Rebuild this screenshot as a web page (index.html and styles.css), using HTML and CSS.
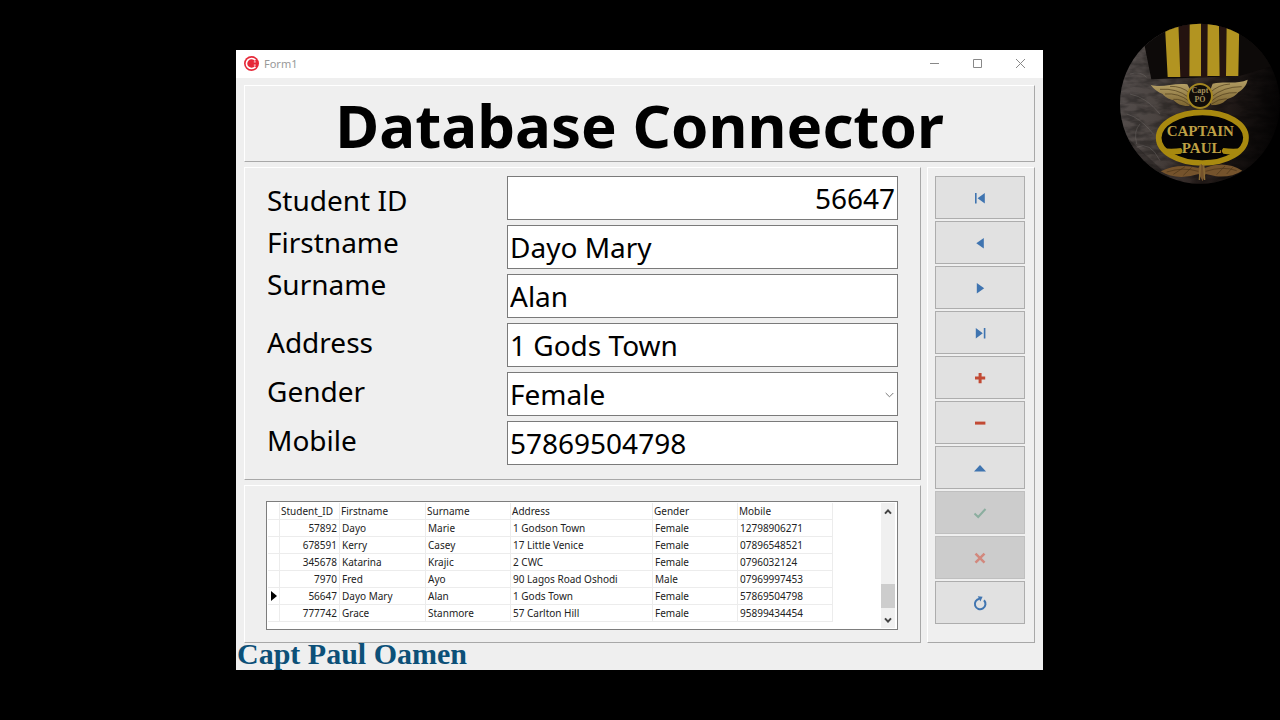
FILE: index.html
```html
<!DOCTYPE html>
<html lang="en">
<head>
<meta charset="utf-8">
<title>Form1</title>
<link rel="stylesheet" href="styles.css">
</head>
<body>
<main class="window">
  <header class="titlebar">
    <svg class="app-icon" viewBox="0 0 16 16" aria-hidden="true">
      <circle cx="8" cy="8" r="8" fill="#e62a3a"/>
      <path d="M12.200 4.600A5.400 5.400 0 1 0 12.200 11.400" fill="none" stroke="#fff" stroke-width="1.700"/>
      <path d="M12.500 6.300H10.500M12.500 9.700H10.500" fill="none" stroke="#fff" stroke-width="1"/>
    </svg>
    <span class="caption">Form1</span>
    <button class="win-btn" type="button" aria-label="Minimize"><svg viewBox="0 0 11 11"><path d="M1 5.5h9"/></svg></button>
    <button class="win-btn" type="button" aria-label="Maximize"><svg viewBox="0 0 11 11"><path d="M1.500 1.500h8v8h-8z"/></svg></button>
    <button class="win-btn" type="button" aria-label="Close"><svg viewBox="0 0 11 11"><path d="M1 1l9 9M10 1l-9 9"/></svg></button>
  </header>

  <div class="client">
    <section class="panel banner"><h1>Database Connector</h1></section>

    <form class="panel record">
      <div class="labels">
        <div class="label-group">
          <label for="student-id">Student ID</label>
          <label for="firstname">Firstname</label>
          <label for="surname">Surname</label>
        </div>
        <div class="label-group roomy">
          <label for="address">Address</label>
          <label for="gender">Gender</label>
          <label for="mobile">Mobile</label>
        </div>
      </div>
      <div class="fields">
        <input class="field numeric" id="student-id" type="text" value="56647">
        <input class="field" id="firstname" type="text" value="Dayo Mary">
        <input class="field" id="surname" type="text" value="Alan">
        <input class="field" id="address" type="text" value="1 Gods Town">
        <div class="combo">
          <select class="field" id="gender"><option>Male</option><option selected>Female</option></select>
          <svg class="combo-arrow" viewBox="0 0 9 6" aria-hidden="true"><path d="M0.7 1l3.8 3.8L8.3 1"/></svg>
        </div>
        <input class="field" id="mobile" type="text" value="57869504798">
      </div>
    </form>

    <section class="panel listing">
      <div class="grid-box">
        <table class="records">
          <colgroup><col class="c-mark"><col class="c-id"><col class="c-first"><col class="c-sur"><col class="c-addr"><col class="c-gen"><col class="c-mob"></colgroup>
          <thead>
            <tr><th></th><th>Student_ID</th><th>Firstname</th><th>Surname</th><th>Address</th><th>Gender</th><th>Mobile</th></tr>
          </thead>
          <tbody>
            <tr><td></td><td class="num">57892</td><td>Dayo</td><td>Marie</td><td>1 Godson Town</td><td>Female</td><td>12798906271</td></tr>
            <tr><td></td><td class="num">678591</td><td>Kerry</td><td>Casey</td><td>17 Little Venice</td><td>Female</td><td>07896548521</td></tr>
            <tr><td></td><td class="num">345678</td><td>Katarina</td><td>Krajic</td><td>2 CWC</td><td>Female</td><td>0796032124</td></tr>
            <tr><td></td><td class="num">7970</td><td>Fred</td><td>Ayo</td><td>90 Lagos Road Oshodi</td><td>Male</td><td>07969997453</td></tr>
            <tr><td class="mark"><svg viewBox="0 0 6 10" aria-label="Current record"><path d="M0 0l6 5-6 5z"/></svg></td><td class="num">56647</td><td>Dayo Mary</td><td>Alan</td><td>1 Gods Town</td><td>Female</td><td>57869504798</td></tr>
            <tr><td></td><td class="num">777742</td><td>Grace</td><td>Stanmore</td><td>57 Carlton Hill</td><td>Female</td><td>95899434454</td></tr>
          </tbody>
        </table>
        <div class="scrollbar">
          <button class="scroll-btn" type="button" aria-label="Scroll up"><svg viewBox="0 0 8 6"><path d="M1 4.6L4 1.4l3 3.2"/></svg></button>
          <div class="track"><div class="thumb"></div></div>
          <button class="scroll-btn" type="button" aria-label="Scroll down"><svg viewBox="0 0 8 6"><path d="M1 1.4l3 3.2 3-3.2"/></svg></button>
        </div>
      </div>
    </section>

    <nav class="panel navigator" aria-label="Record navigator">
      <button class="nav-btn" type="button" aria-label="First"><svg viewBox="0 0 14 14"><path class="blue" d="M2 2h1.600v10.500H2zM11.800 2v10.500L4.600 7.200z"/></svg></button>
      <button class="nav-btn" type="button" aria-label="Prior"><svg viewBox="0 0 14 14"><path class="blue" d="M10.800 2v10.500L3.300 7.200z"/></svg></button>
      <button class="nav-btn" type="button" aria-label="Next"><svg viewBox="0 0 14 14"><path class="blue" d="M3.800 2v10.500l7.400-5.300z"/></svg></button>
      <button class="nav-btn" type="button" aria-label="Last"><svg viewBox="0 0 14 14"><path class="blue" d="M2.800 2v10.500l7-5.300zM10.800 2h1.600v10.500h-1.600z"/></svg></button>
      <button class="nav-btn" type="button" aria-label="Insert"><svg viewBox="0 0 14 14"><path class="red" d="M5.6 2h3v3.6h3.6v3H8.6v3.6h-3V8.600H2v-3h3.600z"/></svg></button>
      <button class="nav-btn" type="button" aria-label="Delete"><svg viewBox="0 0 14 14"><path class="red" d="M2 5.600h10.400v3H2z"/></svg></button>
      <button class="nav-btn" type="button" aria-label="Edit"><svg viewBox="0 0 14 14"><path class="blue" d="M1 10.500h12L7 4z"/></svg></button>
      <button class="nav-btn" type="button" aria-label="Post" disabled><svg viewBox="0 0 14 14"><path class="tick" d="M1.500 7.500l3.700 3.500 7.300-8"/></svg></button>
      <button class="nav-btn" type="button" aria-label="Cancel" disabled><svg viewBox="0 0 14 14"><path class="cross" d="M2.500 2.700l9 9M11.500 2.700l-9 9"/></svg></button>
      <button class="nav-btn" type="button" aria-label="Refresh"><svg viewBox="0 0 14 14"><path class="ring" d="M6.500 2.700A5.300 5.300 0 1 0 11 4.300"/><path class="blue" d="M4.800 0.200L9.600 0.800 7.400 5.400z"/></svg></button>
    </nav>
  </div>

  <footer class="signature">Capt Paul Oamen</footer>
</main>

<svg class="watermark" viewBox="0 0 510 528" role="img" aria-label="Captain Paul">
  <defs>
    <clipPath id="disc"><circle cx="270" cy="269" r="240"/></clipPath>
    <clipPath id="hat"><path d="M100 0H420L386 190H124z"/></clipPath>
    <linearGradient id="leather" x1="0" y1="0.350" x2="1" y2="0.500">
      <stop offset="0" stop-color="#575150"/><stop offset="0.300" stop-color="#4b4441"/>
      <stop offset="0.600" stop-color="#2d2320"/><stop offset="0.850" stop-color="#130f0e"/><stop offset="1" stop-color="#050404"/>
    </linearGradient>
    <linearGradient id="wing" x1="0" y1="0" x2="0" y2="1">
      <stop offset="0" stop-color="#b5a066"/><stop offset="1" stop-color="#7c6430"/>
    </linearGradient>
    <filter id="grain" x="0" y="0" width="1" height="1">
      <feTurbulence type="fractalNoise" baseFrequency="0.020 0.050" numOctaves="3" seed="8"/>
      <feColorMatrix values="0 0 0 0 0  0 0 0 0 0  0 0 0 0 0  -3 0 0 0 1.900"/>
    </filter>
  </defs>
  <g clip-path="url(#disc)">
    <rect width="510" height="528" fill="url(#leather)"/>
    <rect width="510" height="528" filter="url(#grain)" opacity="0.300"/>
    <path d="M30 350L220 528H0V350z" fill="#0d0a09" opacity="0.300"/>
    <path d="M60 240Q110 250 150 300M50 300Q90 310 130 360M60 180Q90 170 110 190M80 400Q120 380 150 440M90 330Q70 350 80 390" fill="none" stroke="#777170" stroke-width="2" opacity="0.600"/>
    <path d="M104 0H510V150L388 186 124 196 104 96z" fill="#0d0a09"/>
    <g clip-path="url(#hat)">
      <path d="M205 20h34l-2 170h-28zM271 20h23v170h-21zM330 20h20l-2 170h-19z" fill="#241310"/>
      <path d="M164 20L205 22 211 189 173 189zM239 20h34v167h-35zM293 20h34l2 166h-37zM350 20h38l-3 166h-37z" fill="#b29421"/>
    </g>
    <g fill="url(#wing)">
      <path d="M122 212C155 224 190 205 232 211L246 238 238 276C215 277 202 270 190 258 175 256 163 247 158 240 144 234 130 225 122 212z"/>
      <path d="M413 197C380 212 345 200 308 209L297 238 304 273C328 275 341 266 352 255 367 252 379 243 385 235 399 226 410 214 413 197z"/>
    </g>
    <g fill="none" stroke="#4b3a1a" stroke-width="2">
      <path d="M150 226Q200 222 236 250M165 240Q205 236 238 262M190 256Q215 254 236 272M180 217Q215 216 240 238"/>
      <path d="M395 218Q340 218 303 250M380 236Q335 234 303 262M350 254Q325 254 305 270M360 210Q325 212 300 236"/>
    </g>
    <circle cx="270" cy="246" r="36" fill="#110d09" stroke="#a38620" stroke-width="6"/>
    <g fill="#a1905b" font-family="Liberation Serif, serif" font-weight="bold" text-anchor="middle">
      <text x="270" y="237" font-size="24">Capt</text>
      <text x="270" y="265" font-size="24">PO</text>
    </g>
    <ellipse cx="277" cy="371" rx="131" ry="76" fill="#050404" stroke="#a8890f" stroke-width="17"/>
    <path d="M153 402Q185 406 213 402Q222 411 213 419Q190 422 168 419zM399 402Q370 406 340 402Q331 411 340 419Q365 422 386 419z" fill="#a8890f"/>
    <g fill="#bea044" font-family="Liberation Serif, serif" font-weight="bold" text-anchor="middle">
      <text x="271" y="367" font-size="45">CAPTAIN</text>
      <text x="275" y="417" font-size="45">PAUL</text>
    </g>
    <path d="M152 472Q205 446 265 462L274 450 284 462Q345 438 397 470Q365 491 318 487L287 480 278 502 266 480Q200 501 152 472z" fill="#75532c"/>
    <path d="M170 474Q220 458 265 472M287 472Q340 455 380 470M190 481L225 458M220 484L245 460M320 482L345 456M350 480L368 460" fill="none" stroke="#4a3318" stroke-width="2"/>
    <path d="M271 452L268 498M281 452L284 498" stroke="#8b6c35" stroke-width="4"/>
  </g>
</svg>
</body>
</html>
```
FILE: styles.css
```css
* { box-sizing: border-box; }

body {
  margin: 0;
  min-height: 100vh;
  padding: 50px 237px 50px 236px;
  background: #000;
  color: #000;
  font-family: "Noto Sans", sans-serif;
  display: flex;
  align-items: stretch;
}

button { padding: 0; border: 0; background: none; font: inherit; }

.window {
  flex: 1;
  min-width: 760px;
  display: flex;
  flex-direction: column;
  background: #efefef;
}

.titlebar {
  height: 28px;
  padding: 0 1px 1px 8px;
  display: flex;
  align-items: center;
  background: #fff;
}
.app-icon { width: 15px; height: 15px; }
.caption {
  flex: 1;
  padding-left: 5px;
  color: #999;
  font: 11px/14px "Noto Sans", sans-serif;
}
.win-btn {
  width: 43px;
  height: 27px;
  display: flex;
  align-items: center;
  justify-content: center;
}
.win-btn svg { width: 11px; height: 11px; fill: none; stroke: #888; }

.client {
  flex: 1;
  padding: 7px 8px 0;
  display: grid;
  grid-template-columns: 1fr 108px;
  grid-template-rows: auto auto 1fr;
  gap: 5px 6px;
}
.panel {
  border: 1px solid #a8a8a8;
  border-top-color: #fff;
  border-left-color: #fff;
}

.banner { grid-column: 1 / -1; padding-top: 3px; text-align: center; }
.banner h1 {
  margin: 0;
  font-size: 60px;
  line-height: 72px;
  font-weight: bold;
}

.record {
  padding: 8px 22px 14px;
  display: grid;
  grid-template-columns: 240px 1fr;
  font-size: 28px;
}
.labels {
  padding-top: 3px;
  display: flex;
  flex-direction: column;
  gap: 13px;
}
.label-group { display: flex; flex-direction: column; line-height: 42px; }
.roomy { line-height: 49px; }
.fields { display: flex; flex-direction: column; gap: 5px; }
.field {
  width: 100%;
  height: 44px;
  padding: 0 2px;
  border: 1px solid #7a7a7a;
  border-radius: 0;
  background: #fff;
  color: #000;
  font: inherit;
  appearance: none;
}
.numeric { text-align: right; }
.combo { position: relative; display: flex; }
.combo-arrow {
  position: absolute;
  right: 4px;
  top: 20px;
  width: 9px;
  height: 6px;
  fill: none;
  stroke: #777;
  pointer-events: none;
}

.listing { padding: 15px 22px 12px 21px; }
.grid-box {
  height: 129px;
  padding: 1px 2px 1px 1px;
  display: flex;
  justify-content: space-between;
  border: 1px solid #7d7d7d;
  background: #fff;
}
.records {
  width: 565px;
  height: 119px;
  table-layout: fixed;
  border-collapse: separate;
  border-spacing: 0;
  font: 10px/16px "Noto Sans", sans-serif;
  color: #222;
}
.c-mark { width: 12px; }
.c-id { width: 60px; }
.c-first { width: 86px; }
.c-sur { width: 85px; }
.c-addr { width: 142px; }
.c-gen { width: 85px; }
.c-mob { width: 95px; }
.records th, .records td {
  height: 17px;
  padding: 0 2px;
  border-right: 1px solid #ececec;
  border-bottom: 1px solid #ececec;
  text-align: left;
  font-weight: normal;
  white-space: nowrap;
}
.records th { padding: 0 1px; }
.records .num { text-align: right; }
.records .mark { padding: 0 0 0 3px; }
.mark svg { display: block; width: 6px; height: 10px; fill: #000; }

.scrollbar { width: 14px; display: flex; flex-direction: column; background: #f0f0f0; }
.scroll-btn {
  height: 17px;
  display: flex;
  align-items: center;
  justify-content: center;
}
.scroll-btn svg { width: 8px; height: 6px; fill: none; stroke: #444; stroke-width: 2; }
.track { flex: 1; display: flex; flex-direction: column; justify-content: flex-end; padding-bottom: 3px; }
.thumb { height: 24px; background: #cdcdcd; }

.navigator {
  grid-column: 2;
  grid-row: 2 / 4;
  padding: 8px 9px 8px 7px;
  display: flex;
  flex-direction: column;
  gap: 2px;
}
.nav-btn {
  height: 43px;
  display: flex;
  align-items: center;
  justify-content: center;
  border: 1px solid #adadad;
  background: #e1e1e1;
}
.nav-btn:disabled { background: #ccc; border-color: #bfbfbf; }
.nav-btn svg { width: 14px; height: 14px; fill: none; overflow: visible; }
.nav-btn .blue { fill: #3f74b0; }
.nav-btn .red { fill: #c24a34; }
.tick { stroke: #8bae9f; stroke-width: 2; }
.cross { stroke: #d2887d; stroke-width: 2.500; }
.ring { stroke: #3f74b0; stroke-width: 2; }

.signature {
  height: 27px;
  padding-left: 1px;
  color: #0c5078;
  font: bold 30px/22px "Liberation Serif", serif;
}

/* Channel badge floating over the page corner */
.watermark {
  position: absolute;
  top: 14px;
  right: 0;
  width: 170px;
  height: 176px;
}
```
